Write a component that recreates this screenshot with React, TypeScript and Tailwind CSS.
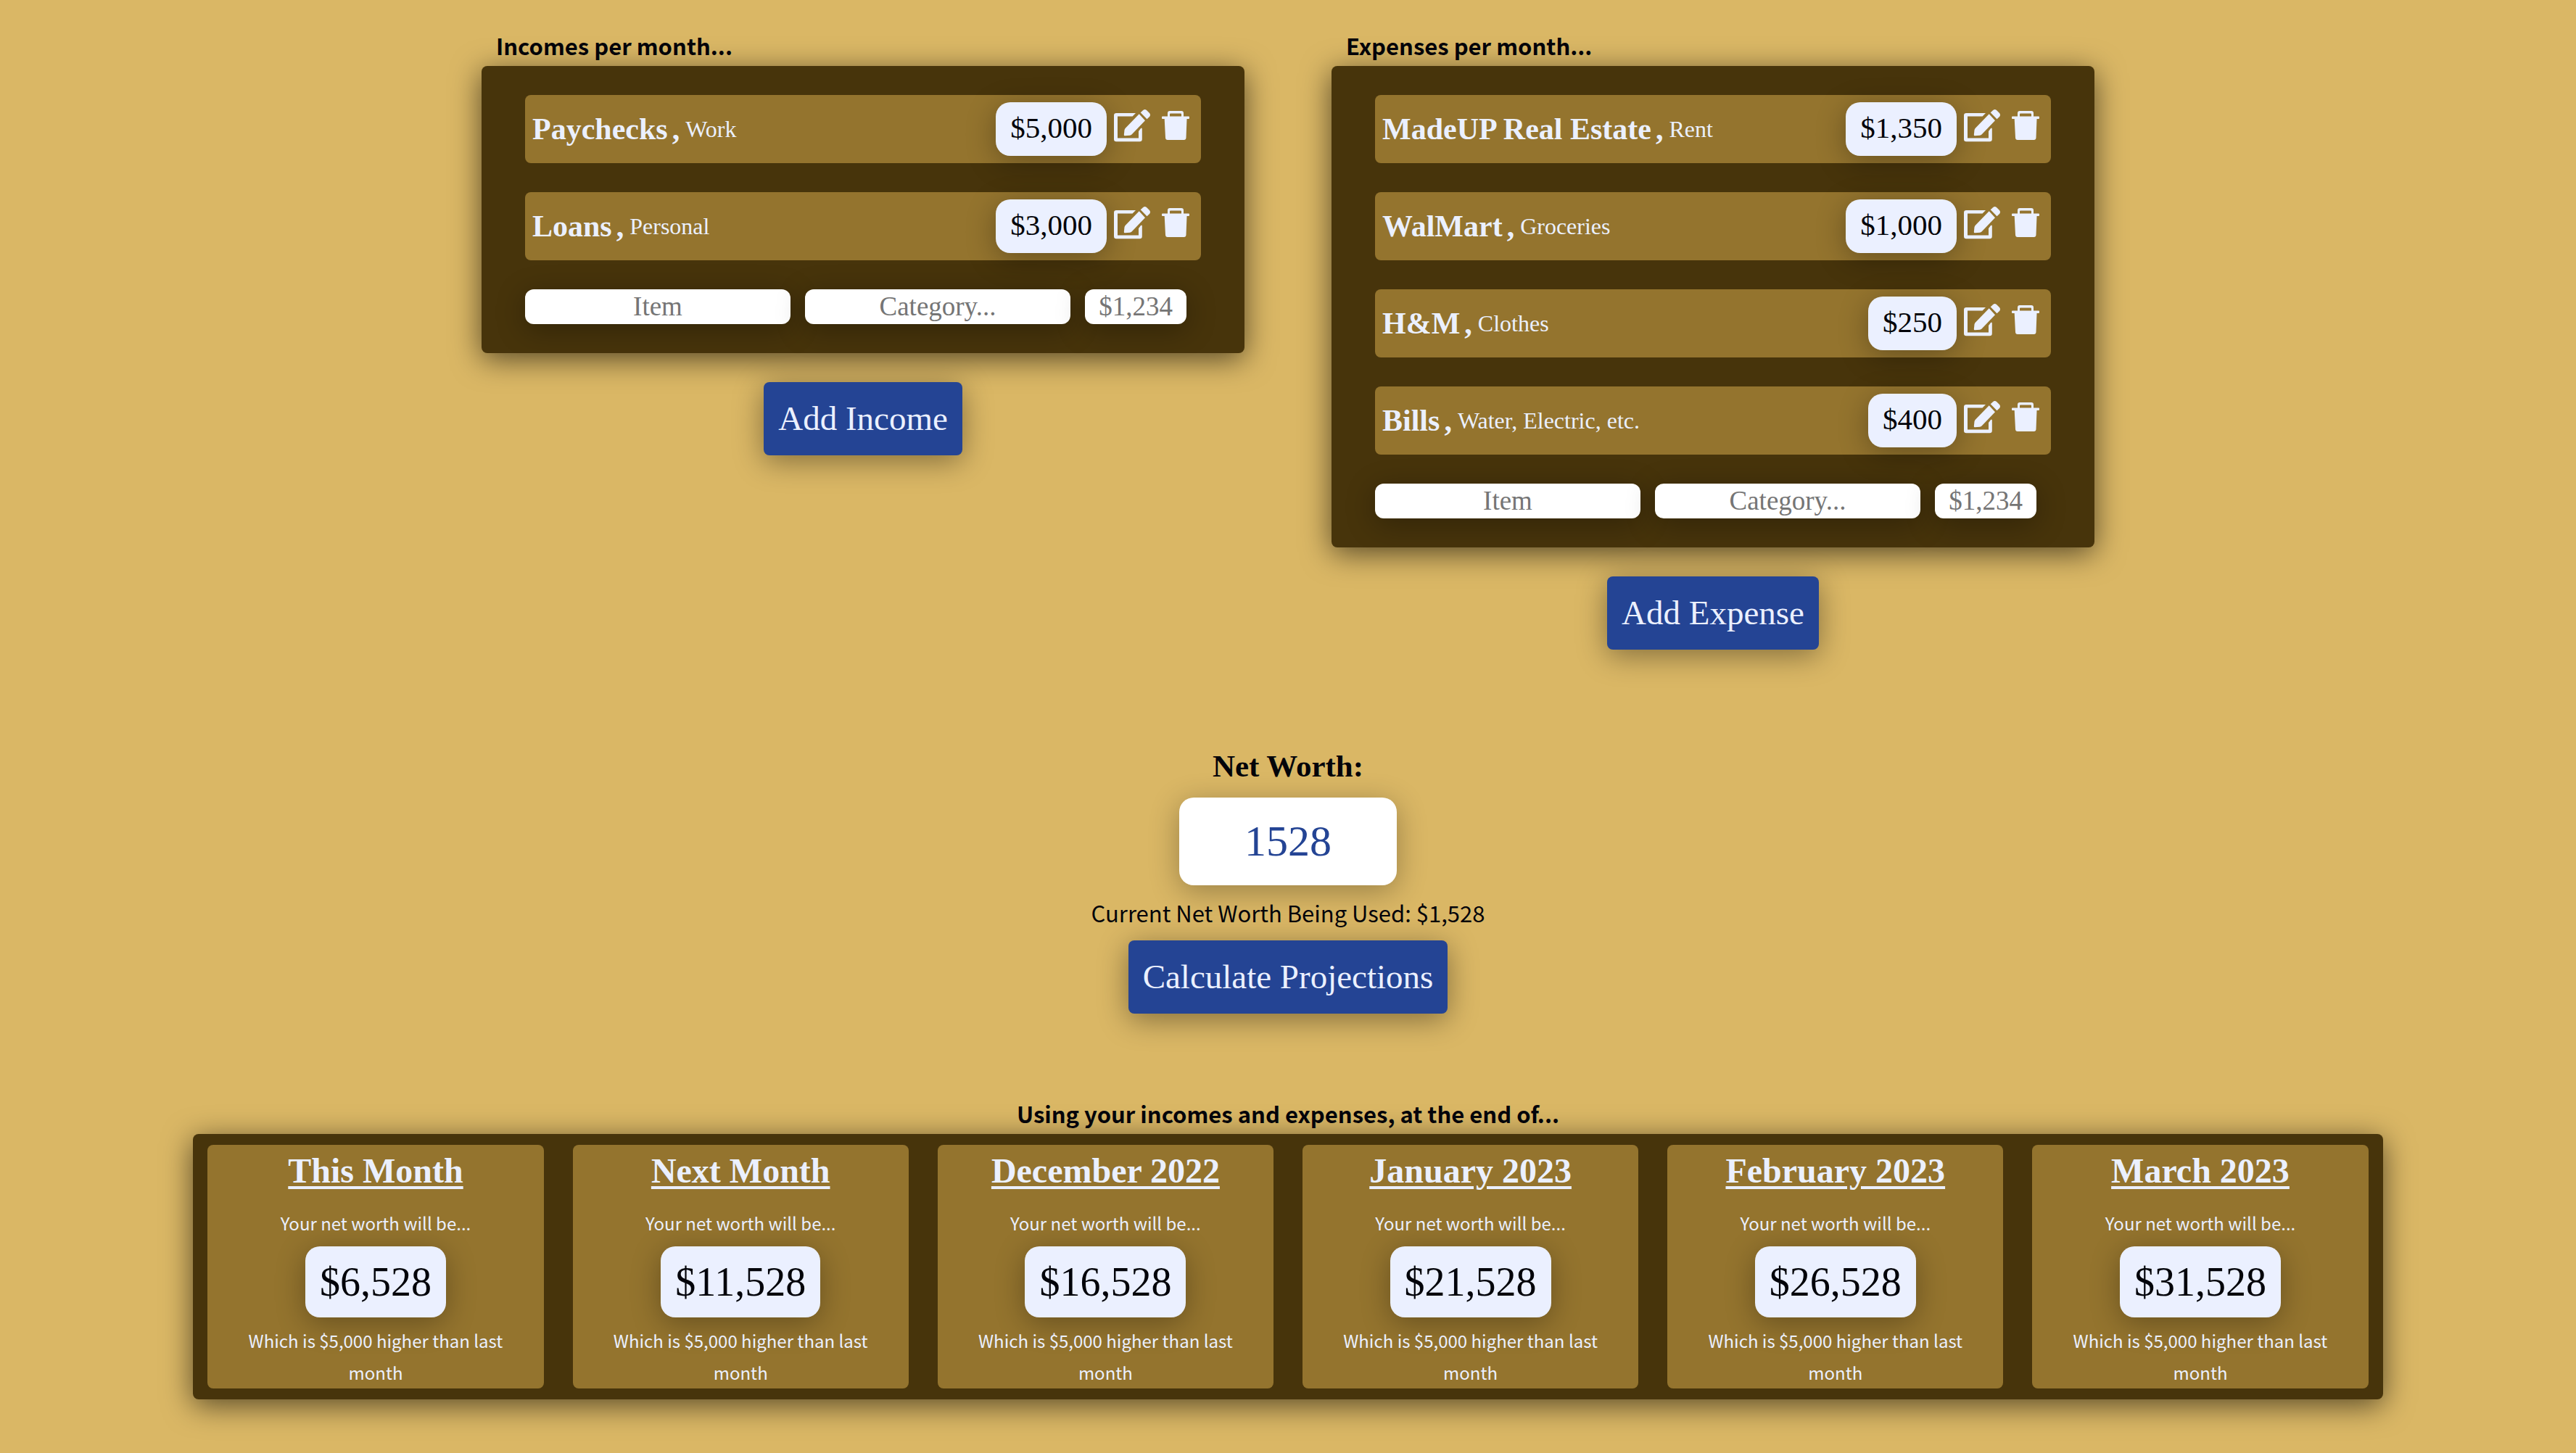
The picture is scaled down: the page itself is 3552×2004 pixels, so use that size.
import React from "react";

type Item = { name: string; category: string; amount: string };

const incomes: Item[] = [
  { name: "Paychecks", category: "Work", amount: "$5,000" },
  { name: "Loans", category: "Personal", amount: "$3,000" },
];

const expenses: Item[] = [
  { name: "MadeUP Real Estate", category: "Rent", amount: "$1,350" },
  { name: "WalMart", category: "Groceries", amount: "$1,000" },
  { name: "H&M", category: "Clothes", amount: "$250" },
  { name: "Bills", category: "Water, Electric, etc.", amount: "$400" },
];

const projections = [
  { title: "This Month", amount: "$6,528" },
  { title: "Next Month", amount: "$11,528" },
  { title: "December 2022", amount: "$16,528" },
  { title: "January 2023", amount: "$21,528" },
  { title: "February 2023", amount: "$26,528" },
  { title: "March 2023", amount: "$31,528" },
];

const serif = "font-['Liberation_Serif',serif]";

function EditIcon() {
  return (
    <svg viewBox="0 0 50 45" className="h-[45px] w-[50px]" fill="currentColor" aria-hidden="true">
      <path d="M30 5 25.500 9.500H5V39.500H34V30L37 26Q38.800 24.500 38.800 27V41Q38.800 44.200 35.500 44.200H3.300Q0 44.200 0 41V8.200Q0 5 3.300 5Z" />
      <path d="M34.700 6.300 43 15.200 24.500 34.500Q23.500 35.500 22 35.700L15 36.300Q13.700 36.300 13.800 35L14.500 28.500Q14.700 27 15.600 26Z" />
      <path d="M36.700 4.200 40 1.200Q42.500-1 45 1L49 5Q51 7.500 49 10L45.500 13.300Z" />
    </svg>
  );
}

function TrashIcon() {
  return (
    <svg viewBox="0 0 38 40" className="h-10 w-[38px]" fill="currentColor" aria-hidden="true">
      <path
        fillRule="evenodd"
        d="M8 7.500V3Q8 0 11 0H27Q30 0 30 3V7.500H37Q38 7.500 38 8.500V10Q38 11 37 11H34.500L33.500 37Q33.300 40 30.500 40H8Q5.200 40 5 37L3.700 11H1Q0 11 0 10V8.500Q0 7.500 1 7.500ZM11 7.500H27V4.500Q27 3.500 26 3.500H12Q11 3.500 11 4.500Z"
      />
    </svg>
  );
}

function ActionButton({ children }: { children: React.ReactNode }) {
  return (
    <button
      type="button"
      className={`${serif} rounded-lg bg-[#244494] px-5 py-5 text-[47px] leading-[61px] text-[#ebf0ff] shadow-[0_8px_40px_rgba(0,0,0,0.4)]`}
    >
      {children}
    </button>
  );
}

function ItemRow({ item }: { item: Item }) {
  return (
    <li className="flex items-center justify-between rounded-lg bg-[#94742e] p-2.5 text-[#ebf0ff]">
      <div className={`${serif} flex items-center leading-[52px]`}>
        <span className="text-[42px] font-bold">{item.name}</span>
        <span className="mr-2 ml-1.5 text-[42px] font-bold">,</span>
        <span className="text-[32px]">{item.category}</span>
      </div>
      <div className="flex items-start">
        <span
          className={`${serif} rounded-[20px] bg-[#ebf0ff] px-5 pt-2 pb-3 text-[41px] leading-[54px] text-[#03040a] shadow-[0_8px_40px_rgba(0,0,0,0.3)]`}
        >
          {item.amount}
        </span>
        <button type="button" aria-label={`Edit ${item.name}`} className="mt-2.5 ml-2.5">
          <EditIcon />
        </button>
        <button type="button" aria-label={`Delete ${item.name}`} className="mt-3 mr-1.5 ml-4">
          <TrashIcon />
        </button>
      </div>
    </li>
  );
}

const field = `${serif} h-12 min-w-0 rounded-xl bg-white text-center text-[37px] leading-[48px] text-[#244494] shadow-[0_8px_40px_rgba(0,0,0,0.3)] placeholder:text-[#757575]`;

function Ledger({ title, items, action }: { title: string; items: Item[]; action: string }) {
  return (
    <section className="flex min-w-0 flex-1 flex-col items-center">
      <h2 className="w-full px-5 pb-0.5 text-[31px] leading-[52px] font-bold">{title}</h2>
      <div className="w-full rounded-lg bg-[#47340b] px-15 py-10 shadow-[0_8px_40px_rgba(0,0,0,0.6)]">
        <ul className="flex flex-col gap-10">
          {items.map((item) => (
            <ItemRow key={item.name} item={item} />
          ))}
        </ul>
        <form className="mt-10 mr-5 flex gap-5">
          <input className={`${field} flex-1`} type="text" placeholder="Item" aria-label={`${action}: item`} />
          <input className={`${field} flex-1`} type="text" placeholder="Category..." aria-label={`${action}: category`} />
          <input className={`${field} w-[140px]`} type="text" placeholder="$1,234" aria-label={`${action}: amount`} />
        </form>
      </div>
      <div className="mt-10">
        <ActionButton>{action}</ActionButton>
      </div>
    </section>
  );
}

export default function App() {
  return (
    <main className="flex min-h-screen flex-col items-center bg-[#dab765] pt-[37px] pb-[74px] font-['Noto_Sans_CJK_JP',sans-serif] text-[#03040a]">
      <div className="flex w-full max-w-[2224px] items-start gap-[120px]">
        <Ledger title="Incomes per month..." items={incomes} action="Add Income" />
        <Ledger title="Expenses per month..." items={expenses} action="Add Expense" />
      </div>

      <section className="mt-[134px] flex flex-col items-center">
        <label htmlFor="net-worth" className={`${serif} text-[43px] leading-[54px] font-bold`}>
          Net Worth:
        </label>
        <input
          id="net-worth"
          type="text"
          defaultValue="1528"
          className={`${serif} mt-4 h-[121px] w-[300px] rounded-[20px] bg-white text-center text-[60px] text-[#244494] shadow-[0_8px_40px_rgba(0,0,0,0.3)]`}
        />
        <p className="mt-3 mb-3 text-[31px] leading-[52px]">Current Net Worth Being Used: $1,528</p>
        <ActionButton>Calculate Projections</ActionButton>
      </section>

      <section className="mt-28 w-[85%]">
        <h2 className="pb-0.5 text-center text-[31px] leading-[52px] font-bold">
          Using your incomes and expenses, at the end of...
        </h2>
        <div className="grid grid-cols-6 gap-10 rounded-lg bg-[#47340b] px-5 py-[15px] shadow-[0_8px_40px_rgba(0,0,0,0.6)]">
          {projections.map((p) => (
            <article
              key={p.title}
              className="flex flex-col items-center rounded-lg bg-[#94742e] px-10 text-center text-[24px] leading-[44px] text-[#ebf0ff]"
            >
              <h3 className={`${serif} mt-1 text-[48px] leading-[64px] font-bold underline decoration-[4px] underline-offset-[5px]`}>
                {p.title}
              </h3>
              <p className="mt-[18px]">Your net worth will be...</p>
              <span
                className={`${serif} my-2.5 rounded-[20px] bg-[#ebf0ff] px-5 text-[56px] leading-[98px] text-[#03040a] shadow-[0_8px_40px_rgba(0,0,0,0.3)]`}
              >
                {p.amount}
              </span>
              <p>Which is $5,000 higher than last month</p>
            </article>
          ))}
        </div>
      </section>
    </main>
  );
}
